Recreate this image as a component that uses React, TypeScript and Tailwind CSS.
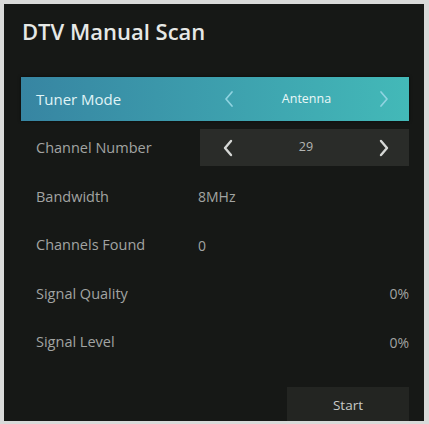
import React from "react";

const Chevron = ({ dir, w = 2.4 }: { dir: "l" | "r"; w?: number }) => (
  <svg width="10" height="18" viewBox="0 0 10 18">
    <polyline
      points={dir === "l" ? "8,2 2,9 8,16" : "2,2 8,9 2,16"}
      fill="none"
      stroke="currentColor"
      strokeWidth={w}
      strokeLinecap="round"
      strokeLinejoin="round"
    />
  </svg>
);

const rows = [
  { label: "Bandwidth", value: "8MHz", h: "h-[49px]" },
  { label: "Channels Found", value: "0", h: "h-[48px]" },
];

export default function App() {
  return (
    <div
      className="w-[429px] h-[424px] bg-[#d9dad9] pt-[4px] pl-[4px] pr-[5px] pb-[3px]"
      style={{ fontFamily: '"Open Sans", "Noto Sans", sans-serif' }}
    >
      <div className="w-full h-full bg-[#161816] flex flex-col pl-[17px] pr-[15px]">
        <div className="h-[71px] pt-[12px] pl-[1px] text-[22px] leading-[30px] font-semibold text-[#e6e8e6]">
          DTV Manual Scan
        </div>

        {/* Tuner Mode */}
        <div className="h-[48px] flex items-center">
          <div className="w-full h-[44px] flex items-center bg-gradient-to-r from-[#3785a2] to-[#43b9b8] shadow-[0_0_3px_rgba(0,0,0,0.6)]">
            <div className="w-[179px] pl-[15px] text-[15px] text-[#e0f4f6]">Tuner Mode</div>
            <div className="flex-1 flex items-center justify-between pl-[24px] pr-[20px] text-[#8fd3e0]">
              <Chevron dir="l" w={1.7} />
              <span className="text-[12.5px] text-[#eaf8f8]">Antenna</span>
              <Chevron dir="r" w={1.7} />
            </div>
          </div>
        </div>

        {/* Channel Number */}
        <div className="h-[49px] flex items-center">
          <div className="w-[179px] pl-[15px] text-[14.5px] text-[#a2a4a2]">Channel Number</div>
          <div className="flex-1 h-[37px] flex items-center justify-between bg-[#2a2c29] pl-[23px] pr-[20px] text-[#d6d8d6]">
            <Chevron dir="l" />
            <span className="text-[12.5px] text-[#b4b6b4]">29</span>
            <Chevron dir="r" />
          </div>
        </div>

        {rows.map((r) => (
          <div key={r.label} className={`${r.h} flex items-center`}>
            <div className="w-[177px] pl-[15px] text-[14.5px] text-[#a2a4a2]">{r.label}</div>
            <div className="text-[14px] text-[#a2a4a2]">{r.value}</div>
          </div>
        ))}

        <div className="h-[49px] flex items-center justify-between pl-[15px]">
          <div className="text-[14.5px] text-[#a2a4a2]">Signal Quality</div>
          <div className="text-[14px] text-[#a2a4a2]">0%</div>
        </div>
        <div className="h-[48px] flex items-center justify-between pl-[15px]">
          <div className="text-[14.5px] text-[#a2a4a2]">Signal Level</div>
          <div className="text-[14px] text-[#a2a4a2]">0%</div>
        </div>

        <div className="flex-1 flex items-end justify-end">
          <div className="w-[122px] h-[34px] bg-[#232522] flex items-center justify-center pt-[3px] text-[13.5px] text-[#c8cac8]">
            Start
          </div>
        </div>
      </div>
    </div>
  );
}
